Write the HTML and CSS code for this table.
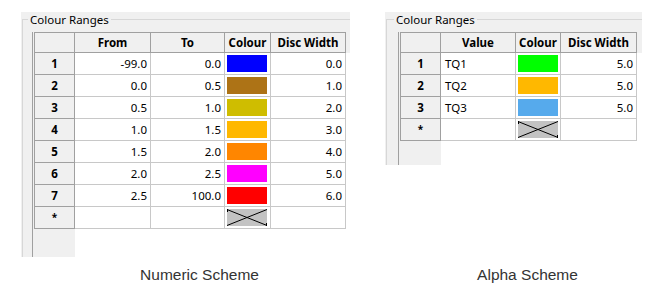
FILE: index.html
```html
<!DOCTYPE html>
<html>
<head>
<meta charset="utf-8">
<link rel="stylesheet" href="styles.css">
</head>
<body>
<div class="page">
  <div class="panel panel--numeric">
    <fieldset class="group">
      <legend class="group-title">Colour Ranges</legend>
      <div class="dg-area">
        <div class="dg-top">
          <div class="dg dg--numeric">
            <div class="hd"></div><div class="hd">From</div><div class="hd">To</div><div class="hd">Colour</div><div class="hd">Disc Width</div>
            <div class="rh">1</div><div class="c num">-99.0</div><div class="c num">0.0</div><div class="c sw"><span class="swatch" style="background:#0000ff"></span></div><div class="c num">0.0</div>
            <div class="rh">2</div><div class="c num">0.0</div><div class="c num">0.5</div><div class="c sw"><span class="swatch" style="background:#ad7316"></span></div><div class="c num">1.0</div>
            <div class="rh">3</div><div class="c num">0.5</div><div class="c num">1.0</div><div class="c sw"><span class="swatch" style="background:#cfbd00"></span></div><div class="c num">2.0</div>
            <div class="rh">4</div><div class="c num">1.0</div><div class="c num">1.5</div><div class="c sw"><span class="swatch" style="background:#ffb800"></span></div><div class="c num">3.0</div>
            <div class="rh">5</div><div class="c num">1.5</div><div class="c num">2.0</div><div class="c sw"><span class="swatch" style="background:#ff8600"></span></div><div class="c num">4.0</div>
            <div class="rh">6</div><div class="c num">2.0</div><div class="c num">2.5</div><div class="c sw"><span class="swatch" style="background:#ff00ff"></span></div><div class="c num">5.0</div>
            <div class="rh">7</div><div class="c num">2.5</div><div class="c num">100.0</div><div class="c sw"><span class="swatch" style="background:#ff0000"></span></div><div class="c num">6.0</div>
            <div class="rh star">*</div><div class="c"></div><div class="c"></div><div class="c sw"><svg class="swatch-empty" width="40" height="17" viewBox="0 0 40 17"><rect x="0" y="0" width="40" height="17" fill="#c3c3c3"/><line x1="0" y1="0.5" x2="40" y2="16.5" stroke="#000" stroke-width="1"/><line x1="0" y1="16.5" x2="40" y2="0.5" stroke="#000" stroke-width="1"/><line x1="0.5" y1="0" x2="0.5" y2="3" stroke="#000"/><line x1="39.5" y1="14" x2="39.5" y2="17" stroke="#000"/></svg></div><div class="c"></div>
          </div>
          <div class="dg-side"><div class="dg-side-hdr"></div></div>
        </div>
        <div class="dg-bottom"><div class="rh-fill"></div><div class="white-fill"></div></div>
      </div>
    </fieldset>
  </div>

  <div class="panel panel--alpha">
    <fieldset class="group">
      <legend class="group-title">Colour Ranges</legend>
      <div class="dg-area">
        <div class="dg-top">
          <div class="dg dg--alpha">
            <div class="hd"></div><div class="hd">Value</div><div class="hd">Colour</div><div class="hd">Disc Width</div>
            <div class="rh">1</div><div class="c txt">TQ1</div><div class="c sw"><span class="swatch" style="background:#00ff00"></span></div><div class="c num">5.0</div>
            <div class="rh">2</div><div class="c txt">TQ2</div><div class="c sw"><span class="swatch" style="background:#ffb800"></span></div><div class="c num">5.0</div>
            <div class="rh">3</div><div class="c txt">TQ3</div><div class="c sw"><span class="swatch" style="background:#56aaec"></span></div><div class="c num">5.0</div>
            <div class="rh star">*</div><div class="c"></div><div class="c sw"><svg class="swatch-empty" width="40" height="17" viewBox="0 0 40 17"><rect x="0" y="0" width="40" height="17" fill="#c3c3c3"/><line x1="0" y1="0.5" x2="40" y2="16.5" stroke="#000" stroke-width="1"/><line x1="0" y1="16.5" x2="40" y2="0.5" stroke="#000" stroke-width="1"/><line x1="0.5" y1="0" x2="0.5" y2="3" stroke="#000"/><line x1="39.5" y1="14" x2="39.5" y2="17" stroke="#000"/></svg></div><div class="c"></div>
          </div>
          <div class="dg-side"><div class="dg-side-hdr"></div></div>
        </div>
        <div class="dg-bottom"><div class="rh-fill"></div><div class="white-fill"></div></div>
      </div>
    </fieldset>
  </div>

  <div class="caption">Numeric Scheme</div>
  <div class="caption">Alpha Scheme</div>
</div>
</body>
</html>
```

FILE: styles.css
```css
* { box-sizing: border-box; }

html, body {
  margin: 0;
  padding: 0;
  background: #ffffff;
}

.page {
  display: grid;
  grid-template-columns: 329px 257px;
  grid-template-rows: 245px auto;
  column-gap: 35px;
  padding: 12px 0 0 21px;
  align-items: start;
}

.panel {
  background: #f0f0f0;
  padding-left: 1px;
  font-family: "Noto Sans", "DejaVu Sans", sans-serif;
  font-size: 11.5px;
  color: #000;
  display: flex;
}

.panel--numeric { height: 245px; }
.panel--alpha { height: 153px; }

.group {
  margin: 0;
  padding: 0;
  border: none;
  border-top: 1px solid #d7d7d7;
  border-left: 1px solid #d7d7d7;
  flex: 1;
  display: flex;
  flex-direction: column;
  min-width: 0;
}

.group-title {
  margin-left: 5px;
  padding: 0 2px;
  line-height: 15px;
  height: 15px;
}

.panel--alpha .group-title { margin-left: 7px; }

.dg-area {
  flex: 1;
  display: flex;
  flex-direction: column;
  margin-top: 5px;
  margin-left: 9px;
  border-left: 1px solid #a0a0a0;
  padding-left: 1px;
  background: #f0f0f0;
}

.panel--alpha .dg-area { margin-left: 11px; }

.dg-top {
  display: flex;
}

.dg {
  display: grid;
  border-top: 1px solid #a0a0a0;
  border-left: 1px solid #a0a0a0;
  background: #ffffff;
  grid-auto-rows: 22px;
}

.dg--numeric {
  grid-template-columns: 40px 76px 74px 46px 75px;
  grid-template-rows: 20px;
}

.dg--alpha {
  grid-template-columns: 40px 75px 45px 76px;
  grid-template-rows: 20px;
}

.hd {
  background: #f0f0f0;
  border-right: 1px solid #a0a0a0;
  border-bottom: 1px solid #a0a0a0;
  font-weight: 700;
  text-align: center;
  line-height: 19px;
  white-space: nowrap;
}

.rh {
  background: #f0f0f0;
  border-right: 1px solid #a0a0a0;
  border-bottom: 1px solid #a0a0a0;
  font-weight: 700;
  text-align: center;
  line-height: 21px;
}

.rh.star { font-size: 10px; }

.c {
  background: #ffffff;
  border-right: 1px solid #c8c8c8;
  border-bottom: 1px solid #c8c8c8;
  line-height: 21px;
  white-space: nowrap;
}

.num {
  text-align: right;
  padding-right: 3px;
}

.txt {
  text-align: left;
  padding-left: 4px;
}

.sw {
  padding: 2px 0 0 2px;
  line-height: 0;
}

.swatch {
  display: block;
  width: 40px;
  height: 17px;
}

.swatch-empty {
  display: block;
}

.dg-side {
  flex: 1;
  background: #ffffff;
}

.dg-side-hdr {
  height: 21px;
  background: #f0f0f0;
}

.dg-bottom {
  flex: 1;
  display: flex;
}

.rh-fill {
  width: 41px;
  background: #f0f0f0;
}

.white-fill {
  flex: 1;
  background: #ffffff;
}

.caption {
  margin-top: 9px;
  padding-left: 28px;
  text-align: center;
  font-family: "Liberation Sans", Arial, sans-serif;
  font-size: 15.5px;
  line-height: 18px;
  color: #333333;
}
```
